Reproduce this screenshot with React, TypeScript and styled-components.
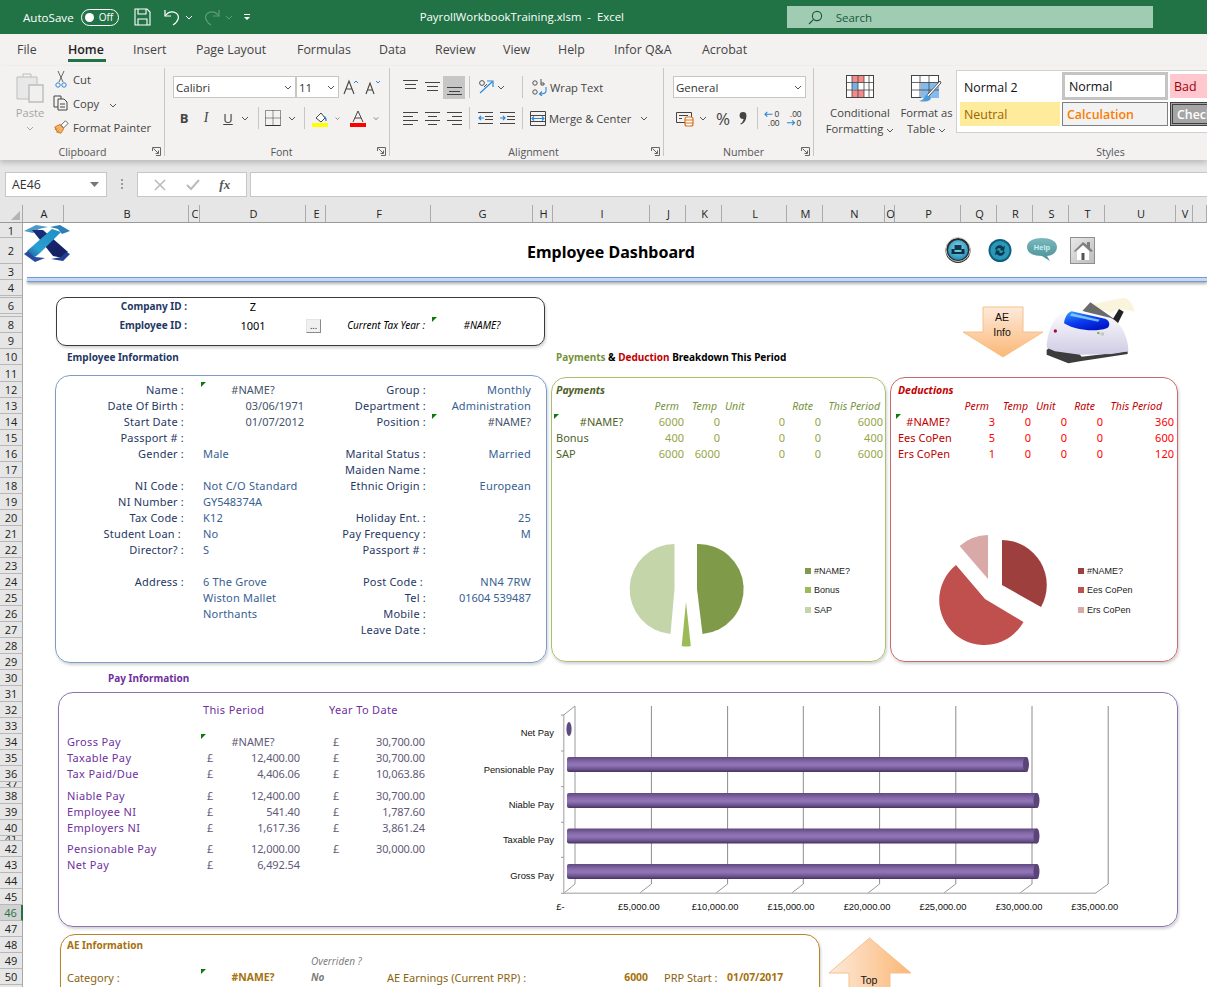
import { Fragment } from 'react';
import { styled, createGlobalStyle } from 'styled-components';

const UI_FONT = '"Open Sans", "Noto Sans", sans-serif';
const SHEET_FONT = '"Noto Sans", "Open Sans", sans-serif';

const COLS = 'ABCDEFGHIJKLMNOPQRSTUVW'.split('');
const COL_W = [41, 125, 11, 106, 20, 105, 102, 20, 97, 36, 36, 65, 36, 62, 10, 66, 36, 36, 36, 36, 71, 17, 14];
const ROW_H = [
  15, 26, 16, 16, 2, 16, 3, 16, 16, 16, 17,
  16, 16, 16, 16, 16, 16, 16, 16, 16, 16, 16, 16, 16, 16, 16, 16, 16, 16, 16, 16, 16, 16, 16, 16, 16,
  6, 16, 16, 16, 5, 16, 16, 16, 16, 16, 16, 16, 16, 16, 16, 20,
];
const colAt = (c: string) => COLS.indexOf(c) + 2;

const TONES: Record<string, string> = {
  black: '#000000',
  navy: '#1f3864',
  blue: '#376092',
  blueNum: '#376092',
  slate: '#44546a',
  olive: '#4f6228',
  oliveHead: '#76923c',
  oliveNum: '#95a648',
  maroon: '#c00000',
  red: '#ff0000',
  purple: '#7030a0',
  purpleNum: '#5f5a78',
  amber: '#8a6410',
  amberBold: '#a5720c',
  grey: '#7f7f7f',
};
const SPACING: Record<string, string> = {
  navy: '0.2px',
  blue: '0.2px',
  purple: '0.35px',
  purpleNum: '-0.1px',
};

const GlobalStyle = createGlobalStyle`
  html, body { margin: 0; height: 100%; overflow: hidden; background: #fff; }
  body { font-family: ${UI_FONT}; }
  * { box-sizing: border-box; }
`;

const Page = styled.div`
  width: 1207px;
  height: 987px;
  overflow: hidden;
  display: flex;
  flex-direction: column;
`;

/* title bar */
const TitleBar = styled.div`
  height: 34px;
  background: #217346;
  color: #fff;
  display: flex;
  align-items: center;
  padding-left: 23px;
  font-size: 11.6px;
`;
const Toggle = styled.div`
  width: 38px;
  height: 17px;
  margin-left: 7px;
  border: 1px solid #fff;
  border-radius: 9px;
  display: flex;
  align-items: center;
  padding: 0 3px;
  gap: 5px;
  font-size: 10px;
  &::before {
    content: '';
    width: 9px;
    height: 9px;
    border-radius: 50%;
    background: #fff;
  }
`;
const QuickIcon = styled.div<{ $ml: number }>`
  margin-left: ${(p) => p.$ml}px;
  display: flex;
`;
const DocTitle = styled.div`
  margin-left: 169px;
  width: 367px;
  padding-bottom: 2px;
  white-space: nowrap;
  font-size: 11.4px;
`;
const SearchBox = styled.div`
  width: 366px;
  height: 22px;
  background: #a0ccb3;
  color: #17583a;
  display: flex;
  align-items: center;
  gap: 13px;
  padding-left: 21px;
  font-size: 11.5px;
`;

/* tabs */
const Tabs = styled.div`
  height: 32px;
  background: #f3f2f1;
  display: flex;
  padding-left: 17px;
`;
const Tab = styled.div<{ $w: number; $active?: boolean }>`
  width: ${(p) => p.$w}px;
  height: 28px;
  padding-top: 7px;
  font-size: 12.4px;
  line-height: 18px;
  white-space: nowrap;
  color: ${(p) => (p.$active ? '#1f1f1f' : '#444444')};
  font-weight: ${(p) => (p.$active ? 600 : 400)};
  position: relative;
  ${(p) =>
    p.$active &&
    `&::after { content: ''; position: absolute; left: 0; bottom: 0; width: 38px; height: 3px; background: #217346; }`}
`;

/* ribbon */
const Ribbon = styled.div`
  height: 94px;
  background: #f3f2f1;
  display: flex;
  color: #444;
  font-size: 11.2px;
  position: relative;
  z-index: 2;
  box-shadow: 0 3px 5px rgba(0, 0, 0, 0.18);
`;
const Group = styled.div<{ $w: number; $pl?: number; $last?: boolean }>`
  width: ${(p) => p.$w}px;
  display: flex;
  flex-direction: column;
  position: relative;
  padding-left: ${(p) => p.$pl ?? 0}px;
  &::after {
    content: '';
    display: ${(p) => (p.$last ? 'none' : 'block')};
    position: absolute;
    right: 0;
    top: 2px;
    bottom: 4px;
    width: 1px;
    background: #c8c6c4;
  }
`;
const GroupBody = styled.div`
  flex: 1;
  display: flex;
  flex-direction: column;
  padding-top: 10px;
  min-height: 0;
`;
const GroupLabel = styled.div<{ $pl?: number }>`
  height: 16px;
  line-height: 16px;
  text-align: center;
  color: #555;
  font-size: 10.6px;
  padding-left: ${(p) => p.$pl ?? 0}px;
  position: relative;
`;
const Launcher = styled.span`
  position: absolute;
  right: 4px;
  top: 3px;
  display: flex;
`;
const Row1 = styled.div`
  height: 22px;
  display: flex;
  align-items: center;
`;
const Row2 = styled.div`
  height: 22px;
  margin-top: 9px;
  display: flex;
  align-items: center;
`;
const ClipArea = styled.div`
  display: flex;
  align-items: flex-start;
`;
const Btn = styled.div<{ $w: number; $ml?: number; $on?: boolean }>`
  width: ${(p) => p.$w}px;
  height: 23px;
  margin-left: ${(p) => p.$ml ?? 0}px;
  display: flex;
  align-items: center;
  justify-content: center;
  flex: none;
  background: ${(p) => (p.$on ? '#c6c6c6' : 'transparent')};
`;
const Glyph = styled.span<{ $size: number; $weight?: number; $italic?: boolean; $under?: boolean }>`
  font-size: ${(p) => p.$size}px;
  font-weight: ${(p) => p.$weight ?? 400};
  font-style: ${(p) => (p.$italic ? 'italic' : 'normal')};
  text-decoration: ${(p) => (p.$under ? 'underline' : 'none')};
  font-family: ${(p) => (p.$italic ? '"Liberation Serif", serif' : UI_FONT)};
  color: #444;
`;
const Percent = styled.span`
  font-family: ${UI_FONT};
  font-size: 17px;
  color: #444;
`;
const RSep = styled.div<{ $ml: number }>`
  width: 1px;
  height: 22px;
  margin-left: ${(p) => p.$ml}px;
  background: #c8c6c4;
  flex: none;
`;
const Select = styled.div<{ $w: number; $ml?: number }>`
  width: ${(p) => p.$w}px;
  margin-left: ${(p) => p.$ml ?? 0}px;
  height: 22px;
  background: #fff;
  border: 1px solid #c8c6c4;
  display: flex;
  align-items: center;
  justify-content: space-between;
  padding: 0 3px 0 2px;
  font-size: 11.5px;
  color: #333;
  flex: none;
`;
const Inline = styled.div<{ $ml?: number }>`
  margin-left: ${(p) => p.$ml ?? 0}px;
  white-space: nowrap;
  flex: none;
`;
const PasteCol = styled.div`
  width: 53px;
  padding-left: 7px;
  display: flex;
  flex-direction: column;
  align-items: center;
  color: #a6a6a6;
  font-size: 11.2px;
  margin-top: -4px;
`;
const PasteLabel = styled.span`
  margin: 2px 0 6px;
`;
const ClipList = styled.div`
  display: flex;
  flex-direction: column;
  margin-top: -9px;
`;
const ClipRow = styled.div`
  height: 24px;
  display: flex;
  align-items: center;
  gap: 4px;
  white-space: nowrap;
`;
const ClipIcon = styled.span`
  width: 16px;
  display: flex;
  justify-content: center;
`;
const BigButton = styled.div<{ $w: number; $gap: number }>`
  width: ${(p) => p.$w}px;
  padding-top: 9px;
  display: flex;
  flex-direction: column;
  align-items: center;
  text-align: center;
  line-height: 16px;
  flex: none;
  span {
    margin-top: ${(p) => p.$gap}px;
  }
`;
const StylesRow = styled.div`
  display: flex;
  height: 78px;
`;
const Gallery = styled.div`
  margin-top: 4px;
  width: 252px;
  height: 63px;
  background: #fff;
  border: 1px solid #d2d0ce;
  border-right: 0;
  display: grid;
  grid-template-columns: 100px 106px 40px;
  grid-template-rows: 28px 28px;
  column-gap: 2px;
  padding: 2px 0 0 3px;
  font-size: 12.4px;
  overflow: hidden;
`;
const STYLE_CELLS: Record<string, string> = {
  plain: 'background:#fff;color:#111;',
  normal: 'background:#fff;color:#111;border:3px solid #c4c4c4;margin:-1px 0 1px 0;',
  bad: 'background:#ffc7ce;color:#9c0006;margin:1px 0 3px 0;',
  neutral: 'background:#ffeb9c;color:#9c6500;margin:1px 0 3px 0;',
  calc: 'background:#f2f2f2;color:#fa7d00;font-weight:600;border:1px solid #7f7f7f;margin:1px 0 3px 0;',
  check: 'background:#a5a5a5;color:#fff;font-weight:600;border:3px double #3f3f3f;margin:1px 0 3px 0;',
};
const StyleCell = styled.div<{ $kind: string }>`
  display: flex;
  align-items: center;
  padding-left: 4px;
  white-space: nowrap;
  overflow: hidden;
  ${(p) => STYLE_CELLS[p.$kind]}
`;

/* formula bar */
const FormulaBar = styled.div`
  height: 45px;
  background: #e6e6e6;
  display: flex;
  align-items: flex-start;
  padding: 12px 0 0 5px;
`;
const NameBox = styled.div`
  width: 102px;
  height: 25px;
  background: #fff;
  border: 1px solid #c8c6c4;
  display: flex;
  align-items: center;
  justify-content: space-between;
  padding: 0 7px 0 6px;
  font-size: 12.4px;
  color: #333;
`;
const Grip = styled.div`
  width: 2px;
  height: 10px;
  margin: 7px 14px 0 14px;
  background-image: linear-gradient(#9a9a9a 50%, transparent 50%);
  background-size: 2px 4px;
`;
const FxBox = styled.div`
  width: 110px;
  height: 25px;
  background: #fff;
  border: 1px solid #c8c6c4;
  display: flex;
  align-items: center;
  justify-content: space-around;
  padding: 0 6px;
`;
const FxGlyph = styled.span`
  font-family: "Liberation Serif", serif;
  font-style: italic;
  font-size: 13px;
  font-weight: 700;
  color: #555;
`;
const FormulaInput = styled.div`
  flex: 1;
  height: 25px;
  margin-left: 3px;
  background: #fff;
  border: 1px solid #c8c6c4;
  border-right: 0;
`;

/* sheet */
const Sheet = styled.div`
  display: grid;
  grid-template-columns: 23px ${COL_W.map((w) => `${w}px`).join(' ')};
  grid-template-rows: 18px ${ROW_H.map((h) => `${h}px`).join(' ')};
  height: 782px;
  overflow: hidden;
  background: #fff;
  font-family: ${SHEET_FONT};
  font-size: 11px;
`;
const Corner = styled.div`
  grid-column: 1;
  grid-row: 1;
  background: #e6e6e6;
  border-right: 1px solid #a8a8a8;
  border-bottom: 1px solid #9a9a9a;
  position: relative;
  &::after {
    content: '';
    position: absolute;
    right: 2px;
    bottom: 2px;
    border-style: solid;
    border-width: 0 0 9px 9px;
    border-color: transparent transparent #b4b4b4 transparent;
  }
`;
const ColHead = styled.div<{ $i: number }>`
  grid-column: ${(p) => p.$i};
  grid-row: 1;
  background: #e6e6e6;
  border-right: 1px solid #ababab;
  border-bottom: 1px solid #9a9a9a;
  color: #222;
  font-family: ${UI_FONT};
  font-size: 11px;
  padding-left: 2px;
  display: flex;
  align-items: center;
  justify-content: center;
`;
const RowHead = styled.div<{ $i: number; $active?: boolean }>`
  grid-column: 1;
  grid-row: ${(p) => p.$i};
  background: ${(p) => (p.$active ? '#d2d2d2' : '#e6e6e6')};
  color: ${(p) => (p.$active ? '#217346' : '#222')};
  border-right: ${(p) => (p.$active ? '2px solid #217346' : '1px solid #a8a8a8')};
  border-bottom: 1px solid #b8b8b8;
  font-family: ${UI_FONT};
  font-size: 11px;
  display: flex;
  align-items: center;
  justify-content: center;
  overflow: hidden;
`;
const BLine = styled.div`
  grid-column: 2 / -1;
  grid-row: 4 / 6;
  height: 5px;
  margin: 13px 0 0 4px;
  background: #c6d9f1;
  border-top: 1px solid #6f9bd8;
  border-bottom: 1px solid #6f9bd8;
  box-shadow: 0 2px 3px rgba(0, 0, 0, 0.3);
`;

const PANELS: Record<string, string> = {
  black: '#3a3a3a',
  blue: '#7c9ccc',
  green: '#a9c06f',
  red: '#c96a6a',
  purple: '#8d73b0',
  amber: '#b9832a',
};
const Panel = styled.div<{ $c: string; $e: string; $r: number; $end: number; $tone: string; $m: string; $radius?: number }>`
  grid-column: ${(p) => colAt(p.$c)} / ${(p) => colAt(p.$e) + 1};
  grid-row: ${(p) => p.$r + 1} / ${(p) => p.$end + 2};
  margin: ${(p) => p.$m};
  border: 1px solid ${(p) => PANELS[p.$tone]};
  border-radius: ${(p) => p.$radius ?? 15}px;
  box-shadow: 1px 2px 3px rgba(0, 0, 0, 0.18);
`;

type CellProps = {
  $c: string;
  $e?: string;
  $r: number;
  $align?: 'left' | 'right' | 'center';
  $pl?: number;
  $pr?: number;
  $tone?: string;
  $flag?: boolean;
  $raise?: number;
};
const JUSTIFY = { left: 'flex-start', right: 'flex-end', center: 'center' };
const Cell = styled.div<CellProps>`
  grid-column: ${(p) => colAt(p.$c)} / ${(p) => colAt(p.$e ?? p.$c) + 1};
  grid-row: ${(p) => p.$r + 1};
  display: flex;
  align-items: center;
  justify-content: ${(p) => JUSTIFY[p.$align ?? 'left']};
  padding: 0 ${(p) => p.$pr ?? 0}px ${(p) => p.$raise ?? 2}px ${(p) => p.$pl ?? 0}px;
  color: ${(p) => TONES[p.$tone ?? 'black']};
  letter-spacing: ${(p) => SPACING[p.$tone ?? ''] ?? 'normal'};
  white-space: nowrap;
  min-width: 0;
  position: relative;
  ${(p) =>
    p.$flag &&
    `&::before { content: ''; position: absolute; left: 1px; top: 0; border-style: solid; border-width: 5px 5px 0 0; border-color: #0b7a0b transparent transparent transparent; }`}
`;
const BoldCell = styled(Cell)`
  font-weight: 700;
  font-size: 10px;
  letter-spacing: normal;
  padding-bottom: 0;
`;
const AeFigure = styled(Cell)`
  font-weight: 700;
  font-size: 10.4px;
  padding-bottom: 0;
`;
const ItalicCell = styled(Cell)`
  font-style: italic;
  font-size: 10px;
  padding-bottom: 0;
`;
const HeadCell = styled(ItalicCell)`
  font-size: 10.5px;
`;
const BoxTitle = styled(HeadCell)`
  font-weight: 700;
`;
const NoFlag = styled(ItalicCell)`
  font-weight: 700;
`;
const Money = styled(Cell)`
  justify-content: space-between;
  padding: 0 6px 2px 7px;
`;
const Tint = styled.span<{ $color: string }>`
  color: ${(p) => p.$color};
`;
const Title = styled(Cell)`
  font-size: 16px;
  font-weight: 700;
  padding-top: 2px;
  padding-bottom: 0;
`;
const DotsButton = styled.div`
  grid-column: ${colAt('E')};
  grid-row: 9;
  width: 15px;
  height: 14px;
  margin-top: 2px;
  background: #f0f0f0;
  border: 1px solid #e4e4e4;
  border-right-color: #8a8a8a;
  border-bottom-color: #8a8a8a;
  font-size: 9px;
  line-height: 11px;
  text-align: center;
  color: #222;
`;
const IconBar = styled.div`
  grid-column: ${colAt('P')} / ${colAt('T') + 1};
  grid-row: 3;
  display: flex;
  align-items: center;
  padding-left: 50px;
  margin-top: -2px;
`;
const IconSlot = styled.div<{ $ml: number }>`
  margin-left: ${(p) => p.$ml}px;
  display: flex;
  flex: none;
`;
const HomeBox = styled.div`
  margin-left: 13px;
  width: 25px;
  height: 27px;
  border: 1px solid #8f8f8f;
  background: linear-gradient(135deg, #e8e8e8, #bdbdbd);
  display: flex;
  align-items: center;
  justify-content: center;
  flex: none;
`;
const Canvas = styled.div<{ $c: string; $e: string; $r: number; $end: number; $m?: string }>`
  grid-column: ${(p) => colAt(p.$c)} / ${(p) => colAt(p.$e) + 1};
  grid-row: ${(p) => p.$r + 1} / ${(p) => p.$end + 2};
  margin: ${(p) => p.$m ?? 0};
  display: flex;
  align-items: flex-start;
  min-width: 0;
`;
const Legend = styled.div`
  margin-top: 35px;
  display: flex;
  flex-direction: column;
  font-family: "Liberation Sans", sans-serif;
  font-size: 9px;
  color: #222;
`;
const LegendItem = styled.div<{ $color: string }>`
  height: 19.5px;
  display: flex;
  align-items: center;
  gap: 2px;
  &::before {
    content: '';
    width: 6px;
    height: 6px;
    background: ${(p) => p.$color};
    margin-right: 1px;
  }
`;

const Chev = ({ c = '#555' }: { c?: string }) => (
  <svg width="8" height="5" viewBox="0 0 8 5" fill="none">
    <path d="M1 1l3 3 3-3" stroke={c} strokeWidth="1" />
  </svg>
);
const LaunchIcon = () => (
  <svg width="9" height="9" viewBox="0 0 9 9" fill="none" stroke="#666">
    <path d="M.5 4V.5H8.5V8.5H4" />
    <path d="M1.5 1.5l5 5M3.5 6.5h3v-3" />
  </svg>
);
const LinesIcon = ({ lines, w = 16, h = 18, c = '#444' }: { lines: number[][]; w?: number; h?: number; c?: string }) => (
  <svg width={w} height={h} viewBox={`0 0 ${w} ${h}`}>
    {lines.map(([a, b, y], i) => (
      <line key={i} x1={a} x2={b} y1={y + 0.5} y2={y + 0.5} stroke={c} />
    ))}
  </svg>
);

const SaveIcon = () => (
  <svg width="17" height="18" viewBox="0 0 17 18" fill="none" stroke="#fff" strokeWidth="1.1">
    <path d="M1 1h12l3 3v13H1z" />
    <path d="M4 1v5h8V1M4 17v-6h9v6" />
  </svg>
);
const UndoIcon = ({ c = '#fff' }: { c?: string }) => (
  <svg width="17" height="18" viewBox="0 0 17 18" fill="none" stroke={c} strokeWidth="1.2">
    <path d="M1 2v6h6" />
    <path d="M1 8c3-4 7-5 11-3 4 3 3 8-3 12" />
  </svg>
);
const RedoIcon = () => (
  <svg width="17" height="18" viewBox="0 0 17 18" fill="none" stroke="#5f9a7b" strokeWidth="1.2">
    <path d="M16 2v6h-6" />
    <path d="M16 8c-3-4-7-5-11-3-4 3-3 8 3 12" />
  </svg>
);
const PasteIcon = () => (
  <svg width="28" height="31" viewBox="0 0 28 31" fill="#e8e8e8" stroke="#bdbdbd">
    <path d="M1 5h20v22H1z" />
    <path d="M7 5V2h8v3" fill="none" />
    <path d="M13 13h14v17H13z" fill="#f0f0f0" strokeWidth="1.4" />
  </svg>
);
const CutIcon = () => (
  <svg width="12" height="17" viewBox="0 0 12 17" fill="none">
    <path d="M3 0l5 11M9 0L4 11" stroke="#666" />
    <circle cx="3" cy="14" r="2.2" stroke="#2b88d8" />
    <circle cx="9" cy="14" r="2.2" stroke="#2b88d8" />
  </svg>
);
const CopyIcon = () => (
  <svg width="16" height="16" viewBox="0 0 16 16" fill="none" stroke="#444">
    <path d="M1 1h7v11H1z" />
    <path d="M5 4h6l3 3v8H5z" fill="#f3f2f1" />
    <path d="M7 9h5M7 12h5" />
  </svg>
);
const PainterIcon = () => (
  <svg width="18" height="16" viewBox="0 0 18 16" fill="none">
    <path d="M2 8l6-3 4 5-3 5-4-1z" fill="#f7b267" stroke="#c8741a" />
    <path d="M9 6l5-5 3 3-5 5z" fill="#fff" stroke="#555" />
    <path d="M5 10l-3 1M7 12l-3 2" stroke="#c8741a" />
  </svg>
);
const GrowA = ({ size, up }: { size: number; up: boolean }) => (
  <svg width="16" height="16" viewBox="0 0 16 16" fill="none">
    <path d={size > 13 ? 'M1 15L6 2l5 13M3 10h6' : 'M1 15L5 4l4 11M2.5 11h5'} stroke="#444" strokeWidth="1.1" />
    <path d={up ? 'M11 4l2-2 2 2' : 'M11 2l2 2 2-2'} stroke="#2b88d8" />
  </svg>
);
const BordersIcon = () => (
  <svg width="16" height="16" viewBox="0 0 16 16" fill="none" stroke="#333" strokeDasharray="1 1">
    <path d="M.5.5h15v15H.5zM8 .5v15M.5 8h15" />
    <path d="M.5 15.5h15" strokeDasharray="none" />
  </svg>
);
const FillIcon = () => (
  <svg width="17" height="17" viewBox="0 0 17 17" fill="none">
    <path d="M4 8l5-5 4 5-4 4z" stroke="#444" fill="#fff" />
    <path d="M12 7c2 0 2 3 2 4" stroke="#2b88d8" strokeWidth="1.5" />
    <rect y="13" width="16" height="4" fill="#ffff00" />
  </svg>
);
const ColorAIcon = () => (
  <svg width="17" height="17" viewBox="0 0 17 17" fill="none">
    <path d="M3 12L8 1l5 11M5 8h6" stroke="#444" />
    <rect y="13" width="16" height="4" fill="#ff0000" />
  </svg>
);
const OrientIcon = () => (
  <svg width="18" height="18" viewBox="0 0 18 18" fill="none">
    <path d="M3 15L15 4M10 3h6v6" stroke="#2b88d8" strokeWidth="1.2" />
    <circle cx="5" cy="5" r="2.4" stroke="#555" />
    <path d="M7 9l3-3" stroke="#555" />
  </svg>
);
const WrapIcon = () => (
  <svg width="15" height="17" viewBox="0 0 15 17" fill="none">
    <circle cx="3" cy="4" r="2.2" stroke="#555" />
    <path d="M9 0v6M9 4h3v2H9" stroke="#555" />
    <circle cx="3" cy="13" r="2.2" stroke="#555" />
    <path d="M14 8v4c0 2-3 3-6 3M10 12.5L7.5 15l2.5 2" stroke="#2b88d8" strokeWidth="1.1" />
  </svg>
);
const IndentIcon = ({ out }: { out: boolean }) => (
  <svg width="15" height="14" viewBox="0 0 15 14" fill="none">
    <path d="M0 1.5h15M7 5.5h8M7 8.5h8M0 12.5h15" stroke="#444" />
    <path d={out ? 'M6 7H1M3 5L1 7l2 2' : 'M0 7h5M3 5l2 2-2 2'} stroke="#2b88d8" strokeWidth="1.2" />
  </svg>
);
const MergeIcon = () => (
  <svg width="16" height="15" viewBox="0 0 16 15" fill="none">
    <path d="M.5.5h15v14H.5z" stroke="#444" />
    <path d="M.5 4.5h15M.5 10.5h15" stroke="#444" />
    <path d="M2 7.5h12M4 5.5l-2 2 2 2M12 5.5l2 2-2 2" stroke="#2b88d8" strokeWidth="1.1" />
  </svg>
);
const AccountIcon = () => (
  <svg width="18" height="17" viewBox="0 0 18 17" fill="none">
    <path d="M.5 2.5h15v10H.5z" stroke="#444" />
    <path d="M3 5.5h9M3 8.5h3" stroke="#444" />
    <rect x="9" y="7" width="8" height="9" rx="2" fill="#fff" stroke="#d6701a" strokeWidth="1.2" />
    <path d="M9 10h8M9 13h8" stroke="#d6701a" />
  </svg>
);
const CommaIcon = () => (
  <svg width="8" height="13" viewBox="0 0 8 13" fill="#444">
    <circle cx="4" cy="3.5" r="3.4" />
    <path d="M7.2 4c.4 4-2 7-5.4 8.6l-.5-.8C3.5 10.4 4.8 8.4 4.6 5.5z" />
  </svg>
);
const DecimalIcon = ({ more }: { more: boolean }) => (
  <svg width="18" height="18" viewBox="0 0 18 18" fill="none">
    {more ? (
      <>
        <path d="M9 5H1M3.5 2.5L1 5l2.5 2.5" stroke="#2b88d8" strokeWidth="1.2" />
        <text x="11" y="8" fontSize="9" fill="#444" fontFamily="Liberation Sans">0</text>
        <text x="4" y="17" fontSize="9" fill="#444" fontFamily="Liberation Sans">.00</text>
      </>
    ) : (
      <>
        <text x="4" y="8" fontSize="9" fill="#444" fontFamily="Liberation Sans">.00</text>
        <path d="M1 14h8M6.5 11.5L9 14l-2.5 2.5" stroke="#2b88d8" strokeWidth="1.2" />
        <text x="11" y="17" fontSize="9" fill="#444" fontFamily="Liberation Sans">0</text>
      </>
    )}
  </svg>
);
const CondIcon = () => (
  <svg width="28" height="23" viewBox="0 0 28 23">
    <rect x="0.5" y="0.5" width="27" height="22" fill="#fff" stroke="#444" />
    <rect x="6" y="1" width="12" height="6.5" fill="#f58a8a" />
    <rect x="6" y="7.5" width="6" height="7" fill="#74b2e4" />
    <rect x="6" y="15" width="12" height="7" fill="#f58a8a" />
    <path d="M6 0v23M12 0v23M18 0v23M23 0v23M0 7.5h28M0 15h28" stroke="#444" strokeWidth="0.8" fill="none" />
  </svg>
);
const TableIcon = () => (
  <svg width="31" height="28" viewBox="0 0 31 28">
    <rect x="0.5" y="0.5" width="27" height="22" fill="#fff" stroke="#444" />
    <rect x="10" y="7" width="18" height="16" fill="#84bbee" />
    <path d="M9 0v23M18 0v23M0 7.5h28M0 15h28" stroke="#444" strokeWidth="0.8" fill="none" />
    <path d="M29 6L17 19c-2 1-1 3 0 3l13-14z" fill="#fff" stroke="#555" />
    <path d="M16 20c-3 0-2 5-8 6 5 1 11 1 12-3z" fill="#4f9bd6" />
  </svg>
);

const XLogo = () => (
  <svg width="48" height="39" viewBox="0 0 48 39">
    <defs>
      <linearGradient id="lg-light" x1="1" y1="0" x2="0" y2="1">
        <stop offset="0" stopColor="#1e8fc4" />
        <stop offset="0.7" stopColor="#2aa0cf" />
        <stop offset="1" stopColor="#1c5a9e" />
      </linearGradient>
      <linearGradient id="lg-dark" x1="0" y1="0" x2="1" y2="1">
        <stop offset="0" stopColor="#1a2f7a" />
        <stop offset="1" stopColor="#131d5c" />
      </linearGradient>
    </defs>
    <path d="M1 7L13 1 25 3 16 5 10 9z" fill="#3a8fc2" opacity="0.9" />
    <path d="M27 3L37 1l10 6-8 3-4-5z" fill="#2d7fb8" />
    <path d="M9 6H20L45 28 40 34 30 32z" fill="url(#lg-dark)" />
    <path d="M38 8L29 5 4 27 12 33 17 29z" fill="url(#lg-light)" />
    <path d="M1 30L12 38 22 34 12 33 5 27z" fill="#264b9e" />
    <path d="M47 30l-7 7-12-2 10-2 5-5z" fill="#1f3f94" />
  </svg>
);
const PrintRound = () => (
  <svg width="26" height="27" viewBox="0 0 26 27">
    <defs>
      <radialGradient id="pr" cx="0.5" cy="0.4" r="0.6">
        <stop offset="0" stopColor="#8fdcef" />
        <stop offset="1" stopColor="#1f8db5" />
      </radialGradient>
    </defs>
    <circle cx="13" cy="13.5" r="12.5" fill="#2a2a2a" />
    <circle cx="13" cy="12.5" r="12" fill="none" stroke="#c8c8c8" strokeWidth="1" />
    <circle cx="13" cy="13" r="10" fill="url(#pr)" />
    <path d="M9.5 8h7v5h-7z" fill="#10394b" />
    <path d="M6.5 12h3v3h7v-3h3v5h-13z" fill="#0f2f40" />
  </svg>
);
const RefreshRound = () => (
  <svg width="24" height="25" viewBox="0 0 24 25" fill="none">
    <circle cx="12" cy="12.5" r="11.5" fill="#0f5f7d" />
    <circle cx="12" cy="12.5" r="9.5" fill="#2a97b7" />
    <path d="M7 11c1-4 6-5 8-2l2-1-1 5-4-1 1-1c-1-2-4-1-4 1z" fill="#08384d" />
    <path d="M17 14c-1 4-6 5-8 2l-2 1 1-5 4 1-1 1c1 2 4 1 4-1z" fill="#08384d" />
  </svg>
);
const HelpBubble = () => (
  <svg width="30" height="24" viewBox="0 0 30 24">
    <defs>
      <linearGradient id="hb" x1="0" y1="0" x2="0" y2="1">
        <stop offset="0" stopColor="#7ab8bc" />
        <stop offset="1" stopColor="#4a8f94" />
      </linearGradient>
    </defs>
    <path d="M15 0c8 0 15 3 15 9s-6 9-10 9l3 5-8-5C6 18 0 15 0 9s7-9 15-9z" fill="url(#hb)" />
    <text x="15" y="12" fontSize="7.5" fontWeight="700" textAnchor="middle" fill="#c4f2f5" fontFamily="Liberation Sans">Help</text>
  </svg>
);
const HomeIcon = () => (
  <svg width="22" height="22" viewBox="0 0 22 22">
    <path d="M2 12L11 3l4 3V3h3v6l3 3-2 1-8-7-8 7z" fill="#7f7f7f" />
    <path d="M5 12l6-5.5 6 5.5v9H5z" fill="#fff" />
    <path d="M9.5 14h3v7h-3z" fill="#555" />
  </svg>
);
const PrinterArt = () => (
  <svg width="91" height="70" viewBox="440 270 273 210">
    <defs>
      <linearGradient id="pb" x1="0" y1="0" x2="0" y2="1">
        <stop offset="0" stopColor="#ffffff" />
        <stop offset="1" stopColor="#cfcbe4" />
      </linearGradient>
      <linearGradient id="pw" x1="0" y1="0" x2="0.6" y2="1">
        <stop offset="0" stopColor="#3aa0ff" />
        <stop offset="0.55" stopColor="#0a3cf0" />
        <stop offset="1" stopColor="#0016c8" />
      </linearGradient>
    </defs>
    <path d="M575 298c40-12 90-22 105-22 14 6 26 20 28 42-30-10-50-10-70 2-22-6-48-12-63-22z" fill="#fbf4dc" />
    <path d="M552 315l24-26 72 50-12 10z" fill="#6a6a6a" />
    <path d="M640 345l22-36 14 8-18 36z" fill="#222" />
    <path d="M445 432L470 410 540 440 550 452 688 436V444L545 466 510 472 445 446Z" fill="#3c3c3c" />
    <path d="M445 425C445 390 460 332 500 315L530 310 635 335C665 345 690 390 690 436L640 444 545 446 470 436Z" fill="url(#pb)" />
    <path d="M497 352C499 332 510 318 520 316L620 338C634 342 638 360 625 367 590 379 530 373 497 352Z" fill="url(#pw)" />
    <path d="M520 322l84 19-5 6-84-18z" fill="#8fdcff" opacity="0.8" />
    <circle cx="471" cy="375" r="5" fill="#a0103a" />
    <circle cx="600" cy="381" r="4" fill="#6fbf3f" />
    <circle cx="612" cy="384" r="4" fill="#ddd" stroke="#777" />
  </svg>
);
const DownArrow = () => (
  <svg width="82" height="52" viewBox="0 0 82 52">
    <defs>
      <linearGradient id="ar-d" x1="0" y1="0" x2="0" y2="1">
        <stop offset="0" stopColor="#fdeadb" />
        <stop offset="1" stopColor="#fbb775" />
      </linearGradient>
    </defs>
    <path d="M21 1H61V26H81L41 51 1 26H21z" fill="url(#ar-d)" stroke="#f7c08a" />
    <text x="40" y="15" fontSize="10.5" textAnchor="middle" fill="#111" fontFamily="Liberation Sans">AE</text>
    <text x="40" y="30" fontSize="10.5" textAnchor="middle" fill="#111" fontFamily="Liberation Sans">Info</text>
  </svg>
);
const UpArrow = () => (
  <svg width="84" height="60" viewBox="0 0 84 60">
    <defs>
      <linearGradient id="ar-u" x1="0" y1="0" x2="1" y2="0">
        <stop offset="0" stopColor="#fdeadb" />
        <stop offset="1" stopColor="#fbb775" />
      </linearGradient>
    </defs>
    <path d="M41.5 1L83 36H62V70H21V36H1z" fill="url(#ar-u)" stroke="#f7c08a" />
    <text x="41" y="47" fontSize="10.5" textAnchor="middle" fill="#111" fontFamily="Liberation Sans">Top</text>
  </svg>
);

const EMP_LEFT: [number, string, string, number?][] = [
  [15, 'Passport # :', ''],
  [16, 'Gender :', 'Male'],
  [18, 'NI Code :', 'Not C/O Standard'],
  [19, 'NI Number :', 'GY548374A'],
  [20, 'Tax Code :', 'K12'],
  [21, 'Student Loan :', 'No', 8],
  [22, 'Director? :', 'S'],
  [24, 'Address :', '6 The Grove'],
  [25, '', 'Wiston Mallet'],
  [26, '', 'Northants'],
];
const EMP_RIGHT: [number, string, string, number?][] = [
  [12, 'Group :', 'Monthly'],
  [13, 'Department :', 'Administration'],
  [14, 'Position :', '#NAME?'],
  [16, 'Marital Status :', 'Married'],
  [17, 'Maiden Name :', ''],
  [18, 'Ethnic Origin :', 'European'],
  [20, 'Holiday Ent. :', '25'],
  [21, 'Pay Frequency :', 'M'],
  [22, 'Passport # :', ''],
  [24, 'Post Code :', 'NN4 7RW', 8],
  [25, 'Tel :', '01604 539487'],
  [26, 'Mobile :', ''],
  [27, 'Leave Date :', ''],
];
const PAY_ROWS: [number, string, string, string][] = [
  [34, 'Gross Pay', '', '30,700.00'],
  [35, 'Taxable Pay', '12,400.00', '30,700.00'],
  [36, 'Tax Paid/Due', '4,406.06', '10,063.86'],
  [38, 'Niable Pay', '12,400.00', '30,700.00'],
  [39, 'Employee NI', '541.40', '1,787.60'],
  [40, 'Employers NI', '1,617.36', '3,861.24'],
  [42, 'Pensionable Pay', '12,000.00', '30,000.00'],
  [43, 'Net Pay', '6,492.54', ''],
];
const PAYMENTS: [number, string, string, string, string, string, string][] = [
  [14, '#NAME?', '6000', '0', '0', '0', '6000'],
  [15, 'Bonus', '400', '0', '0', '0', '400'],
  [16, 'SAP', '6000', '6000', '0', '0', '6000'],
];
const DEDUCTIONS: [number, string, string, string, string, string, string][] = [
  [14, '#NAME?', '3', '0', '0', '0', '360'],
  [15, 'Ees CoPen', '5', '0', '0', '0', '600'],
  [16, 'Ers CoPen', '1', '0', '0', '0', '120'],
];

const BARS = [
  { y: 757, to: 1028 },
  { y: 793, to: 1038.5 },
  { y: 828.5, to: 1038.5 },
  { y: 864, to: 1038.5 },
];
const BACK_X = [575, 651.4, 727.6, 803.3, 879.6, 955.8, 1032, 1108.2];
const FRONT_X = [563.7, 639.4, 715.6, 791.4, 867.6, 943.4, 1019.6, 1095.3];
const X_LABELS = ['£-', '£5,000.00', '£10,000.00', '£15,000.00', '£20,000.00', '£25,000.00', '£30,000.00', '£35,000.00'];
const LEFT_TICKS = [715, 751, 786.7, 822.3, 857.3, 893.3];
const Y_LABELS: [string, number][] = [
  ['Net Pay', 736],
  ['Pensionable Pay', 773],
  ['Niable Pay', 808],
  ['Taxable Pay', 843],
  ['Gross Pay', 879],
];

const PayChart = () => (
  <svg width="745" height="234" viewBox="431 686 745 234">
    <defs>
      <linearGradient id="cyl" x1="0" y1="0" x2="0" y2="1">
        <stop offset="0" stopColor="#5f4a80" />
        <stop offset="0.35" stopColor="#8a6cae" />
        <stop offset="0.55" stopColor="#9176b6" />
        <stop offset="0.8" stopColor="#6f5594" />
        <stop offset="1" stopColor="#45335f" />
      </linearGradient>
    </defs>
    <g fontFamily="Liberation Sans, sans-serif" fontSize="9.4" fill="#111">
      {BACK_X.map((x) => (
        <line key={x} x1={x} x2={x} y1="706" y2="884" stroke={x === 575 ? '#bdbdbd' : '#8c8c8c'} strokeWidth={x === 575 ? 1.5 : 1} />
      ))}
      {BACK_X.map((x, i) => (
        <line key={x} x1={x} x2={FRONT_X[i]} y1="884" y2="893.3" stroke="#9a9a9a" />
      ))}
      <line x1="563.7" x2="575" y1="715" y2="706" stroke="#9a9a9a" />
      <line x1="563.7" x2="563.7" y1="715" y2="893.3" stroke="#bdbdbd" strokeWidth="1.5" />
      <line x1="563" x2="1096" y1="893.3" y2="893.3" stroke="#bdbdbd" strokeWidth="1.5" />
      {LEFT_TICKS.map((y) => (
        <line key={y} x1="561" x2="564" y1={y} y2={y} stroke="#9a9a9a" />
      ))}
      <ellipse cx="569" cy="729" rx="2.6" ry="7" fill="#5f4a80" />
      {BARS.map((b) => (
        <g key={b.y}>
          <rect x="567" y={b.y} width={b.to - 567} height="15" rx="2" fill="url(#cyl)" />
          <ellipse cx={b.to - 2} cy={b.y + 7.5} rx="3" ry="7.5" fill="#5a4478" />
        </g>
      ))}
      {Y_LABELS.map(([t, y]) => (
        <text key={t} x="554" y={y} textAnchor="end">{t}</text>
      ))}
      {X_LABELS.map((t, i) => (
        <text key={t} x={i === 0 ? 560.5 : FRONT_X[i] - 0.5} y="910" textAnchor="middle">{t}</text>
      ))}
    </g>
  </svg>
);
const PaymentsPie = () => (
  <svg width="252" height="143" viewBox="553 526 252 143">
    <path d="M697 589V544A45.1 45.1 0 0 1 702.5 634Z" fill="#7f9a48" />
    <path d="M674.5 589L670.5 634A45.1 45.1 0 0 1 674.5 544Z" fill="#c5d5aa" />
    <path d="M686 602L690.8 646Q686 647 681.7 646Z" fill="#9bbb59" />
  </svg>
);
const DeductionsPie = () => (
  <svg width="183" height="143" viewBox="895 526 183 143">
    <path d="M1002 585V540A45 45 0 0 1 1041 607Z" fill="#9c3f3d" />
    <path d="M985 599L956 565A45 45 0 1 0 1023.5 622Z" fill="#c0504d" />
    <path d="M988 579L959.6 546A44 44 0 0 1 988 535Z" fill="#d9a9a8" />
  </svg>
);

export default function App() {
  return (
    <Page>
      <GlobalStyle />
      <TitleBar>
        AutoSave
        <Toggle>Off</Toggle>
        <QuickIcon $ml={15}><SaveIcon /></QuickIcon>
        <QuickIcon $ml={13}><UndoIcon /></QuickIcon>
        <QuickIcon $ml={4}><Chev c="#fff" /></QuickIcon>
        <QuickIcon $ml={10}><RedoIcon /></QuickIcon>
        <QuickIcon $ml={5}><Chev c="#5f9a7b" /></QuickIcon>
        <QuickIcon $ml={10}>
          <svg width="8" height="8" viewBox="0 0 8 8" fill="#fff"><path d="M1 1h6v1H1zM1 4h6L4 7z" /></svg>
        </QuickIcon>
        <DocTitle>PayrollWorkbookTraining.xlsm&nbsp; - &nbsp;Excel</DocTitle>
        <SearchBox>
          <svg width="15" height="15" viewBox="0 0 15 15" fill="none" stroke="#17583a" strokeWidth="1.1">
            <circle cx="9" cy="6" r="4.6" />
            <path d="M5.6 9.4L1 14" />
          </svg>
          Search
        </SearchBox>
      </TitleBar>

      <Tabs>
        <Tab $w={51}>File</Tab>
        <Tab $w={65} $active>Home</Tab>
        <Tab $w={63}>Insert</Tab>
        <Tab $w={101}>Page Layout</Tab>
        <Tab $w={82}>Formulas</Tab>
        <Tab $w={56}>Data</Tab>
        <Tab $w={68}>Review</Tab>
        <Tab $w={55}>View</Tab>
        <Tab $w={56}>Help</Tab>
        <Tab $w={88}>Infor Q&amp;A</Tab>
        <Tab $w={60}>Acrobat</Tab>
      </Tabs>

      <Ribbon>
        <Group $w={165}>
          <GroupBody>
            <ClipArea>
              <PasteCol>
                <PasteIcon />
                <PasteLabel>Paste</PasteLabel>
                <Chev c="#a6a6a6" />
              </PasteCol>
              <ClipList>
                <ClipRow><ClipIcon><CutIcon /></ClipIcon>Cut</ClipRow>
                <ClipRow><ClipIcon><CopyIcon /></ClipIcon>Copy <Inline $ml={6}><Chev /></Inline></ClipRow>
                <ClipRow><ClipIcon><PainterIcon /></ClipIcon>Format Painter</ClipRow>
              </ClipList>
            </ClipArea>
          </GroupBody>
          <GroupLabel>Clipboard<Launcher><LaunchIcon /></Launcher></GroupLabel>
        </Group>

        <Group $w={225} $pl={8}>
          <GroupBody>
            <Row1>
              <Select $w={123}>Calibri<Chev /></Select>
              <Select $w={43}>11<Chev /></Select>
              <Btn $w={18} $ml={3}><GrowA size={15} up /></Btn>
              <Btn $w={18} $ml={4}><GrowA size={12} up={false} /></Btn>
            </Row1>
            <Row2>
              <Btn $w={22}><Glyph $size={13} $weight={700}>B</Glyph></Btn>
              <Btn $w={22}><Glyph $size={14} $italic>I</Glyph></Btn>
              <Btn $w={22}><Glyph $size={13} $under>U</Glyph></Btn>
              <Btn $w={12}><Chev /></Btn>
              <RSep $ml={7} />
              <Btn $w={28}><BordersIcon /></Btn>
              <Btn $w={9}><Chev /></Btn>
              <RSep $ml={8} />
              <Btn $w={30}><FillIcon /></Btn>
              <Btn $w={5}><Chev /></Btn>
              <Btn $w={30} $ml={3}><ColorAIcon /></Btn>
              <Btn $w={6}><Chev /></Btn>
            </Row2>
          </GroupBody>
          <GroupLabel>Font<Launcher><LaunchIcon /></Launcher></GroupLabel>
        </Group>

        <Group $w={274} $pl={13}>
          <GroupBody>
            <Row1>
              <Btn $w={15}><LinesIcon w={15} lines={[[0, 15, 2], [2, 13, 6], [2, 13, 10]]} /></Btn>
              <Btn $w={15} $ml={7}><LinesIcon w={15} lines={[[0, 15, 4], [2, 13, 8], [2, 13, 12]]} /></Btn>
              <Btn $w={22} $ml={3} $on><LinesIcon w={15} lines={[[0, 15, 9], [2, 13, 13], [0, 15, 16]]} /></Btn>
              <RSep $ml={4} />
              <Btn $w={18} $ml={7}><OrientIcon /></Btn>
              <Btn $w={8} $ml={2}><Chev /></Btn>
              <RSep $ml={17} />
              <Btn $w={15} $ml={9}><WrapIcon /></Btn>
              <Inline $ml={3}>Wrap Text</Inline>
            </Row1>
            <Row2>
              <Btn $w={15}><LinesIcon w={15} lines={[[0, 15, 3], [0, 10, 7], [0, 15, 11], [0, 10, 15]]} /></Btn>
              <Btn $w={15} $ml={7}><LinesIcon w={15} lines={[[0, 15, 3], [3, 12, 7], [0, 15, 11], [3, 12, 15]]} /></Btn>
              <Btn $w={15} $ml={7}><LinesIcon w={15} lines={[[0, 15, 3], [5, 15, 7], [0, 15, 11], [5, 15, 15]]} /></Btn>
              <RSep $ml={7} />
              <Btn $w={15} $ml={8}><IndentIcon out /></Btn>
              <Btn $w={15} $ml={7}><IndentIcon out={false} /></Btn>
              <RSep $ml={7} />
              <Btn $w={16} $ml={7}><MergeIcon /></Btn>
              <Inline $ml={3}>Merge &amp; Center</Inline>
              <Btn $w={8} $ml={9}><Chev /></Btn>
            </Row2>
          </GroupBody>
          <GroupLabel>Alignment<Launcher><LaunchIcon /></Launcher></GroupLabel>
        </Group>

        <Group $w={150} $pl={9}>
          <GroupBody>
            <Row1>
              <Select $w={133}>General<Chev /></Select>
            </Row1>
            <Row2>
              <Btn $w={18} $ml={3}><AccountIcon /></Btn>
              <Btn $w={8} $ml={5}><Chev /></Btn>
              <Btn $w={18} $ml={7}><Percent>%</Percent></Btn>
              <Btn $w={10} $ml={6}><CommaIcon /></Btn>
              <RSep $ml={9} />
              <Btn $w={17} $ml={6}><DecimalIcon more /></Btn>
              <Btn $w={17} $ml={5}><DecimalIcon more={false} /></Btn>
            </Row2>
          </GroupBody>
          <GroupLabel>Number<Launcher><LaunchIcon /></Launcher></GroupLabel>
        </Group>

        <Group $w={393} $pl={9} $last>
          <StylesRow>
            <BigButton $w={74} $gap={7}>
              <CondIcon />
              <span>Conditional<br />Formatting <Chev /></span>
            </BigButton>
            <BigButton $w={59} $gap={2}>
              <TableIcon />
              <span>Format as<br />Table <Chev /></span>
            </BigButton>
            <Gallery>
              <StyleCell $kind="plain">Normal 2</StyleCell>
              <StyleCell $kind="normal">Normal</StyleCell>
              <StyleCell $kind="bad">Bad</StyleCell>
              <StyleCell $kind="neutral">Neutral</StyleCell>
              <StyleCell $kind="calc">Calculation</StyleCell>
              <StyleCell $kind="check">Check Cell</StyleCell>
            </Gallery>
          </StylesRow>
          <GroupLabel $pl={191}>Styles</GroupLabel>
        </Group>
      </Ribbon>

      <FormulaBar>
        <NameBox>AE46<svg width="9" height="5" viewBox="0 0 9 5" fill="#777"><path d="M0 0h9L4.5 5z" /></svg></NameBox>
        <Grip />
        <FxBox>
          <svg width="12" height="12" viewBox="0 0 12 12" stroke="#bbb" strokeWidth="1.6"><path d="M1 1l10 10M11 1L1 11" /></svg>
          <svg width="14" height="12" viewBox="0 0 14 12" fill="none" stroke="#bbb" strokeWidth="2"><path d="M1 6l4 4 8-9" /></svg>
          <FxGlyph>fx</FxGlyph>
        </FxBox>
        <FormulaInput />
      </FormulaBar>

      <Sheet>
        <Corner />
        {COLS.map((c, i) => (
          <ColHead key={c} $i={i + 2}>{c === 'W' ? '' : c}</ColHead>
        ))}
        {ROW_H.map((h, i) => (
          <RowHead key={i} $i={i + 2} $active={i + 1 === 46}>{h > 3 ? i + 1 : ''}</RowHead>
        ))}

        <BLine />
        <Panel $c="A" $e="H" $r={5} $end={9} $tone="black" $m="1px 8px 3px 33px" $radius={10} />
        <Panel $c="A" $e="H" $r={11} $end={29} $tone="blue" $m="10px 6px 7px 32px" />
        <Panel $c="I" $e="N" $r={11} $end={29} $tone="green" $m="12px -1px 8px -2px" />
        <Panel $c="O" $e="V" $r={11} $end={29} $tone="red" $m="12px 15px 8px 5px" />
        <Panel $c="A" $e="V" $r={31} $end={47} $tone="purple" $m="6px 15px 10px 35px" />
        <Panel $c="A" $e="M" $r={47} $end={51} $tone="amber" $m="13px 3px -30px 37px" />

        <Canvas $c="A" $e="B" $r={1} $end={2} $m="1px 0 0 0"><XLogo /></Canvas>
        <Title $c="G" $e="L" $r={2} $align="center" $pl={4}>Employee Dashboard</Title>
        <IconBar>
          <IconSlot $ml={0}><PrintRound /></IconSlot>
          <IconSlot $ml={17}><RefreshRound /></IconSlot>
          <IconSlot $ml={15}><HelpBubble /></IconSlot>
          <HomeBox><HomeIcon /></HomeBox>
        </IconBar>
        <Canvas $c="Q" $e="S" $r={5} $end={10} $m="10px 0 0 1px"><DownArrow /></Canvas>
        <Canvas $c="S" $e="U" $r={5} $end={10} $m="0 0 0 12px"><PrinterArt /></Canvas>

        <BoldCell $c="B" $r={6} $align="right" $pr={2} $tone="navy">Company ID :</BoldCell>
        <Cell $c="D" $r={6} $align="center" $raise={0}>Z</Cell>
        <BoldCell $c="B" $r={8} $align="right" $pr={2} $tone="navy">Employee ID :</BoldCell>
        <Cell $c="D" $r={8} $align="center" $raise={0}>1001</Cell>
        <DotsButton>...</DotsButton>
        <ItalicCell $c="F" $r={8} $align="right" $pr={6}>Current Tax Year :</ItalicCell>
        <ItalicCell $c="G" $r={8} $align="center" $flag>#NAME?</ItalicCell>

        <BoldCell $c="B" $r={10} $pl={3} $tone="navy">Employee Information</BoldCell>
        <BoldCell $c="I" $e="N" $r={10} $pl={3}>
          <Tint $color="#76923c">Payments</Tint>&nbsp;&amp;&nbsp;<Tint $color="#c00000">Deduction</Tint>&nbsp;Breakdown This Period
        </BoldCell>

        <Cell $c="B" $r={12} $align="right" $pr={5} $tone="navy">Name :</Cell>
        <Cell $c="D" $r={12} $align="center" $tone="slate" $flag>#NAME?</Cell>
        <Cell $c="B" $r={13} $align="right" $pr={5} $tone="navy">Date Of Birth :</Cell>
        <Cell $c="D" $r={13} $align="right" $pr={2} $tone="slate">03/06/1971</Cell>
        <Cell $c="B" $r={14} $align="right" $pr={5} $tone="navy">Start Date :</Cell>
        <Cell $c="D" $r={14} $align="right" $pr={2} $tone="slate">01/07/2012</Cell>
        {EMP_LEFT.map(([r, label, value, pr]) => (
          <Fragment key={r}>
            {label && <Cell $c="B" $r={r} $align="right" $pr={pr ?? 5} $tone="navy">{label}</Cell>}
            {value && <Cell $c="D" $r={r} $pl={3} $tone={r === 19 ? 'blueNum' : 'blue'}>{value}</Cell>}
          </Fragment>
        ))}
        {EMP_RIGHT.map(([r, label, value, pr]) => (
          <Fragment key={r}>
            <Cell $c="F" $r={r} $align="right" $pr={pr ?? 5} $tone="navy">{label}</Cell>
            {value && (
              <Cell $c="G" $r={r} $align="right" $pr={2} $tone={r === 14 ? 'slate' : r === 25 ? 'blueNum' : 'blue'} $flag={r === 14}>
                {value}
              </Cell>
            )}
          </Fragment>
        ))}

        <BoxTitle $c="I" $r={12} $pl={3} $tone="olive">Payments</BoxTitle>
        <HeadCell $c="J" $r={13} $align="right" $pr={7} $tone="oliveHead">Perm</HeadCell>
        <HeadCell $c="K" $r={13} $align="right" $pr={5} $tone="oliveHead">Temp</HeadCell>
        <HeadCell $c="L" $r={13} $pl={3} $tone="oliveHead">Unit</HeadCell>
        <HeadCell $c="M" $r={13} $align="right" $pr={10} $tone="oliveHead">Rate</HeadCell>
        <HeadCell $c="N" $r={13} $align="right" $pr={5} $tone="oliveHead">This Period</HeadCell>
        {PAYMENTS.map(([r, name, a, b, c, d, e]) => (
          <Fragment key={r}>
            <Cell $c="I" $r={r} $align={r === 14 ? 'center' : 'left'} $pl={r === 14 ? 0 : 3} $tone="olive" $flag={r === 14}>{name}</Cell>
            <Cell $c="J" $r={r} $align="right" $pr={2} $tone="oliveNum">{a}</Cell>
            <Cell $c="K" $r={r} $align="right" $pr={2} $tone="oliveNum">{b}</Cell>
            <Cell $c="L" $r={r} $align="right" $pr={2} $tone="oliveNum">{c}</Cell>
            <Cell $c="M" $r={r} $align="right" $pr={2} $tone="oliveNum">{d}</Cell>
            <Cell $c="N" $r={r} $align="right" $pr={2} $tone="oliveNum">{e}</Cell>
          </Fragment>
        ))}
        <Canvas $c="I" $e="N" $r={21} $end={29}>
          <PaymentsPie />
          <Legend>
            <LegendItem $color="#7f9a48">#NAME?</LegendItem>
            <LegendItem $color="#9bbb59">Bonus</LegendItem>
            <LegendItem $color="#c5d5aa">SAP</LegendItem>
          </Legend>
        </Canvas>

        <BoxTitle $c="P" $r={12} $pl={3} $tone="maroon">Deductions</BoxTitle>
        <HeadCell $c="Q" $r={13} $align="right" $pr={8} $tone="maroon">Perm</HeadCell>
        <HeadCell $c="R" $r={13} $align="right" $pr={5} $tone="maroon">Temp</HeadCell>
        <HeadCell $c="S" $r={13} $pl={3} $tone="maroon">Unit</HeadCell>
        <HeadCell $c="T" $r={13} $align="right" $pr={10} $tone="maroon">Rate</HeadCell>
        <HeadCell $c="U" $r={13} $align="right" $pr={14} $tone="maroon">This Period</HeadCell>
        {DEDUCTIONS.map(([r, name, a, b, c, d, e]) => (
          <Fragment key={r}>
            <Cell $c="P" $r={r} $align={r === 14 ? 'center' : 'left'} $pl={r === 14 ? 0 : 3} $tone="maroon" $flag={r === 14}>{name}</Cell>
            <Cell $c="Q" $r={r} $align="right" $pr={2} $tone="red">{a}</Cell>
            <Cell $c="R" $r={r} $align="right" $pr={2} $tone="red">{b}</Cell>
            <Cell $c="S" $r={r} $align="right" $pr={2} $tone="red">{c}</Cell>
            <Cell $c="T" $r={r} $align="right" $pr={2} $tone="red">{d}</Cell>
            <Cell $c="U" $r={r} $align="right" $pr={2} $tone="red">{e}</Cell>
          </Fragment>
        ))}
        <Canvas $c="P" $e="U" $r={21} $end={29}>
          <DeductionsPie />
          <Legend>
            <LegendItem $color="#9c3f3d">#NAME?</LegendItem>
            <LegendItem $color="#c0504d">Ees CoPen</LegendItem>
            <LegendItem $color="#d9a9a8">Ers CoPen</LegendItem>
          </Legend>
        </Canvas>

        <BoldCell $c="B" $r={30} $pl={44} $tone="purple">Pay Information</BoldCell>
        <Cell $c="D" $r={32} $pl={3} $tone="purple">This Period</Cell>
        <Cell $c="F" $r={32} $pl={3} $tone="purple">Year To Date</Cell>
        {PAY_ROWS.map(([r, label, cur, ytd]) => (
          <Fragment key={r}>
            <Cell $c="B" $r={r} $pl={3} $tone="purple">{label}</Cell>
            {r === 34 ? (
              <Cell $c="D" $r={r} $align="center" $tone="purpleNum" $flag>#NAME?</Cell>
            ) : (
              <Money $c="D" $r={r} $tone="purpleNum"><span>£</span><span>{cur}</span></Money>
            )}
            {ytd && <Money $c="F" $r={r} $tone="purpleNum"><span>£</span><span>{ytd}</span></Money>}
          </Fragment>
        ))}
        <Canvas $c="G" $e="U" $r={31} $end={46}><PayChart /></Canvas>

        <BoldCell $c="B" $r={48} $pl={3} $tone="amberBold">AE Information</BoldCell>
        <ItalicCell $c="E" $r={49} $pl={5} $tone="grey">Overriden ?</ItalicCell>
        <Cell $c="B" $r={50} $pl={3} $tone="amber" $raise={0}>Category :</Cell>
        <AeFigure $c="D" $r={50} $align="center" $tone="amberBold" $flag>#NAME?</AeFigure>
        <NoFlag $c="E" $r={50} $pl={5} $tone="grey">No</NoFlag>
        <Cell $c="F" $r={50} $pl={61} $tone="amber" $raise={0}>AE Earnings (Current PRP) :</Cell>
        <AeFigure $c="I" $r={50} $align="right" $pr={2} $tone="amberBold">6000</AeFigure>
        <Cell $c="J" $r={50} $pl={14} $tone="amber" $raise={0}>PRP Start :</Cell>
        <AeFigure $c="L" $r={50} $pl={5} $tone="amberBold">01/07/2017</AeFigure>
        <Canvas $c="N" $e="P" $r={48} $end={51} $m="0 0 0 5px"><UpArrow /></Canvas>
      </Sheet>
    </Page>
  );
}
